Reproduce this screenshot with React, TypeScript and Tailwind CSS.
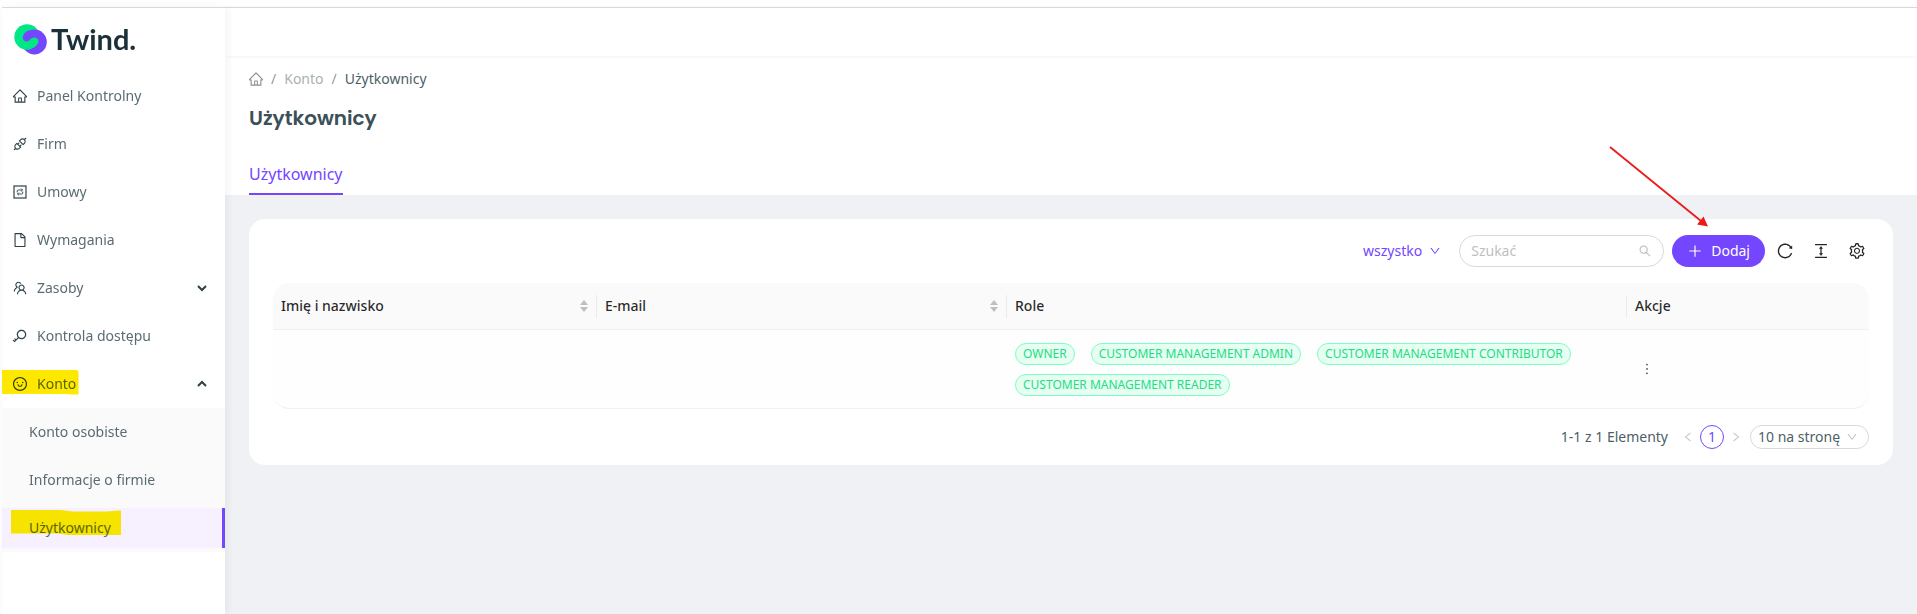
import React, { useState } from 'react';
import {
  AiOutlineApi,
  AiOutlineColumnHeight,
  AiOutlineDown,
  AiOutlineFile,
  AiOutlineHome,
  AiOutlineKey,
  AiOutlineLeft,
  AiOutlineMore,
  AiOutlinePlus,
  AiOutlineReload,
  AiOutlineRight,
  AiOutlineSearch,
  AiOutlineSetting,
  AiOutlineSmile,
  AiOutlineTeam,
} from 'react-icons/ai';

const roles = [
  'OWNER',
  'CUSTOMER MANAGEMENT ADMIN',
  'CUSTOMER MANAGEMENT CONTRIBUTOR',
  'CUSTOMER MANAGEMENT READER',
];

const ContractIcon = () => (
  <svg width="16" height="16" viewBox="0 0 16 16" fill="none" stroke="currentColor">
    <rect x="2" y="2" width="12" height="12" strokeWidth="1.2" />
    <path d="M5.200 8.400V7q0-1 1-1h4.200M9.200 4.600 10.600 6 9.200 7.400M10.800 7.600V9q0 1-1 1H5.600M6.800 8.600 5.400 10 6.800 11.400" strokeWidth="0.9" />
  </svg>
);

const Logo = () => (
  <a href="#" className="flex h-[62px] items-center gap-1 pl-3 text-[#1b3139]">
    <svg width="33" height="31" viewBox="0 0 33 31">
      <circle cx="20.4" cy="18" r="12.4" fill="#7546ff" />
      <circle cx="13" cy="13" r="12.7" fill="#00e785" />
      <path
        d="M20.400 5.600C14 5.600 8.800 9.200 8.800 13.600c0 2.500 1.700 4 3.900 4 3 0 3.500-4 7.500-4 2.500 0 4.300 1.700 4.300 3.900 0 3.500-3.500 6.200-7.500 7.600L26 27l6-8C32.800 12 27 5.600 20.400 5.600Z"
        fill="#7546ff"
      />
    </svg>
    <span className="font-[Lato,sans-serif] text-[29px] leading-8 font-bold">Twind.</span>
  </a>
);

interface NavItemProps {
  icon: React.ReactNode;
  label: string;
  arrow?: 'up' | 'down';
  marked?: boolean;
}

const NavItem: React.FC<NavItemProps> = ({ icon, label, arrow, marked }) => (
  <li className="relative">
    <a href="#" className="flex h-10 items-center gap-[9px] pr-[18px] pl-2.5 text-[#5a6c73]">
      <span className="text-base text-[#2c4149]">{icon}</span>
      <span className="flex-1">{label}</span>
      {arrow && (
        <svg width="10" height="8" viewBox="0 0 10 8" fill="none" stroke="#2c4149" strokeWidth="2">
          <path d={arrow === 'down' ? 'M1 2l4 4 4-4' : 'M1 6l4-4 4 4'} />
        </svg>
      )}
    </a>
    {marked && (
      <svg className="absolute top-1.5 left-0 mix-blend-multiply" width="77" height="25" viewBox="0 0 77 25">
        <path d="M0 0h75l1.500 1.500V24.500H70L64 24H0Z" fill="#ffe800" />
      </svg>
    )}
  </li>
);

const Sidebar = () => (
  <aside className="relative z-10 w-[223px] shrink-0 bg-white shadow-[2px_0_8px_rgba(29,35,41,0.06)]">
    <Logo />
    <nav className="pt-1.5">
      <ul className="flex flex-col gap-2">
        <NavItem icon={<AiOutlineHome />} label="Panel Kontrolny" />
        <NavItem icon={<AiOutlineApi />} label="Firm" />
        <NavItem icon={<ContractIcon />} label="Umowy" />
        <NavItem icon={<AiOutlineFile />} label="Wymagania" />
        <NavItem icon={<AiOutlineTeam />} label="Zasoby" arrow="down" />
        <NavItem icon={<AiOutlineKey />} label="Kontrola dostępu" />
        <NavItem icon={<AiOutlineSmile />} label="Konto" arrow="up" marked />
      </ul>
      <ul className="mt-1 flex flex-col gap-2 bg-[#fafafa] py-1 text-[#5a6c73]">
        <li>
          <a href="#" className="flex h-10 items-center pl-[27px]">Konto osobiste</a>
        </li>
        <li>
          <a href="#" className="flex h-10 items-center pl-[27px]">Informacje o firmie</a>
        </li>
        <li className="relative">
          <a href="#" aria-current="page" className="flex h-10 items-center border-r-3 border-[#7546ff] bg-[#f6f0ff] pl-[27px]">
            Użytkownicy
          </a>
          <svg className="absolute top-px left-2 mix-blend-multiply" width="111" height="27" viewBox="0 0 111 27">
            <path d="M1 1h48c6 0 9 1.500 16 1.500h30c6 0 9-1 16-1V26H60c-6 0-8-1.500-14-1.500H1Z" fill="#fff200" />
          </svg>
        </li>
      </ul>
    </nav>
  </aside>
);

const PageHeader = () => (
  <div className="bg-white px-6 pt-3">
    <nav aria-label="breadcrumb" className="flex h-[22px] items-center gap-2 text-black/45">
      <a href="#" aria-label="Home" className="-mx-px text-base">
        <AiOutlineHome />
      </a>
      <span>/</span>
      <a href="#" className="text-[#a9b1b4]">Konto</a>
      <span>/</span>
      <span className="text-[#4d5f66]">Użytkownicy</span>
    </nav>
    <h1 className="mt-3 font-[Poppins,Inter,sans-serif] text-xl leading-8 font-semibold text-[#3c5058]">Użytkownicy</h1>
    <div role="tablist" className="mt-[18px] flex">
      <button role="tab" aria-selected="true" className="border-b-2 border-[#7546ff] pt-2.5 pb-[7px] text-base leading-6 text-[#7546ff]">
        Użytkownicy
      </button>
    </div>
  </div>
);

const Arrow = () => (
  <svg className="pointer-events-none absolute -top-[90px] -left-[63px]" width="100" height="84" viewBox="0 0 100 84">
    <path d="M1 2 92 76" stroke="#e91c1c" strokeWidth="1.800" />
    <path d="M99 81.500 88 79.500 94.500 71.500Z" fill="#e91c1c" />
  </svg>
);

const Toolbar = () => {
  const [query, setQuery] = useState('');

  return (
    <div className="flex h-16 items-center justify-end">
      <button className="mr-[18px] flex items-center gap-[7px] text-[#7546ff]">
        wszystko
        <AiOutlineDown className="text-xs" />
      </button>
      <label className="mr-2 flex h-8 w-[205px] items-center rounded-full border border-[#d9d9d9] px-[11px]">
        <input
          value={query}
          onChange={(e) => setQuery(e.target.value)}
          placeholder="Szukać"
          aria-label="Szukać"
          className="min-w-0 flex-1 outline-none placeholder:text-[#bfbfbf]"
        />
        <AiOutlineSearch className="text-sm text-[#b4bbbe]" />
      </label>
      <div className="relative">
        <button className="flex h-8 items-center gap-2 rounded-full bg-[#7546ff] px-[15px] text-white">
          <AiOutlinePlus className="text-base" />
          Dodaj
        </button>
        <Arrow />
      </div>
      <div className="ml-[11px] flex gap-[18px] pr-[3px] text-lg text-black/85">
        <button aria-label="Odśwież"><AiOutlineReload /></button>
        <button aria-label="Gęstość"><AiOutlineColumnHeight /></button>
        <button aria-label="Ustawienia"><AiOutlineSetting /></button>
      </div>
    </div>
  );
};

const Sorter = () => (
  <svg width="8" height="12" viewBox="0 0 8 12" fill="#bfbfbf">
    <path d="M4 0l4 5H0ZM4 12l4-5H0Z" />
  </svg>
);

const HeadCell = ({ label, sortable, last }: { label: string; sortable?: boolean; last?: boolean }) => (
  <th scope="col" className="h-[47px] border-b border-[#f0f0f0] p-0 text-left font-medium">
    <div className={`flex h-[23px] items-center justify-between px-2 ${last ? '' : 'border-r border-[#ebebeb]'}`}>
      {label}
      {sortable && <Sorter />}
    </div>
  </th>
);

const UsersTable = () => (
  <table className="w-full table-fixed border-separate border-spacing-0">
    <colgroup>
      <col className="w-[324px]" />
      <col className="w-[410px]" />
      <col />
      <col className="w-[242px]" />
    </colgroup>
    <thead className="text-black/85 [&_th]:bg-[#fafafa] [&_th:first-child]:rounded-tl-2xl [&_th:last-child]:rounded-tr-2xl">
      <tr>
        <HeadCell label="Imię i nazwisko" sortable />
        <HeadCell label="E-mail" sortable />
        <HeadCell label="Role" />
        <HeadCell label="Akcje" last />
      </tr>
    </thead>
    <tbody className="[&_td]:border-b [&_td]:border-[#f0f0f0] [&_td]:bg-[#fefefe] [&_td:first-child]:rounded-bl-2xl [&_td:last-child]:rounded-br-2xl">
      <tr>
        <td />
        <td />
        <td className="px-2 pt-[13px] pb-3">
          <ul className="flex flex-wrap gap-x-4 gap-y-[9px]">
            {roles.map((role) => (
              <li key={role} className="rounded-full border border-[#7dffbf] bg-[#e6fff2] px-[7px] text-xs leading-5 text-[#22dd84]">
                {role}
              </li>
            ))}
          </ul>
        </td>
        <td className="px-3">
          <button aria-label="Więcej" className="flex text-base text-[#3c5058]">
            <AiOutlineMore />
          </button>
        </td>
      </tr>
    </tbody>
  </table>
);

const Pagination = () => (
  <div className="flex items-center justify-end pt-4 pb-4 text-[#4d5f66]">
    <span className="mr-2">1-1 z 1 Elementy</span>
    <button aria-label="Poprzednia" className="flex w-6 justify-center text-xs text-black/25">
      <AiOutlineLeft />
    </button>
    <button aria-current="page" className="h-6 w-6 rounded-full border border-[#7546ff] leading-[22px] text-[#7546ff]">1</button>
    <button aria-label="Następna" className="mr-0.5 flex w-6 justify-center text-xs text-black/25">
      <AiOutlineRight />
    </button>
    <div className="relative">
      <select aria-label="Elementy na stronie" className="h-6 w-[119px] appearance-none rounded-full border border-[#d9d9d9] pl-[7px] leading-[22px] outline-none">
        <option>10 na stronę</option>
        <option>20 na stronę</option>
        <option>50 na stronę</option>
      </select>
      <AiOutlineDown className="pointer-events-none absolute top-1.5 right-[11px] text-xs text-black/25" />
    </div>
  </div>
);

export default function App() {
  return (
    <div className="flex min-h-screen flex-col bg-white pt-[7px] pl-0.5 font-['Noto_Sans',sans-serif] text-sm leading-[22px]">
      <div className="flex flex-1 border-t border-[#dedede]">
        <Sidebar />
        <main className="min-w-0 flex-1 bg-[#eff1f5]">
          <header className="relative h-12 bg-white shadow-[0_0_4px_rgba(0,21,41,0.08)]" />
          <PageHeader />
          <section className="m-6 rounded-2xl bg-white px-6">
            <Toolbar />
            <UsersTable />
            <Pagination />
          </section>
        </main>
      </div>
    </div>
  );
}
